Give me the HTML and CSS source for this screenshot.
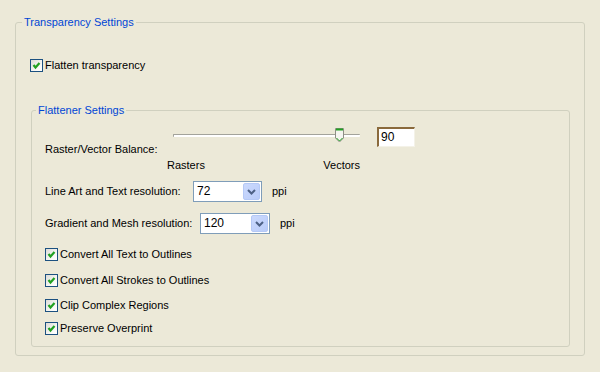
FILE: index.html
```html
<!DOCTYPE html>
<html>
<head>
<meta charset="utf-8">
<link rel="stylesheet" href="styles.css">
</head>
<body>
<fieldset class="group outer">
  <legend class="legend">Transparency Settings</legend>
  <label class="check top-check">
    <span class="box"><svg width="11" height="11" viewBox="0 0 11 11"><polyline points="2.5,5 4.5,7.5 8.5,3" fill="none" stroke="#21a121" stroke-width="2.2"/></svg></span>
    <span>Flatten transparency</span>
  </label>
  <fieldset class="group inner">
    <legend class="legend inner-legend">Flattener Settings</legend>
    <div class="balance">
      <div class="balance-label">Raster/Vector Balance:</div>
      <div class="slider">
        <div class="track-row">
          <div class="track"></div>
          <svg class="thumb" width="9" height="15" viewBox="0 0 9 15">
            <path d="M0.5,0.5 H8.5 V10 L4.5,14 L0.5,10 Z" fill="#f5f5f0" stroke="#8e8e86"/>
            <line x1="1" y1="1.5" x2="8" y2="1.5" stroke="#21a121" stroke-width="2"/>
            <polyline points="1.5,10 4.5,13 7.5,10" fill="none" stroke="#21a121" stroke-width="1"/>
          </svg>
        </div>
        <div class="slider-labels"><span>Rasters</span><span>Vectors</span></div>
      </div>
      <div class="textbox">90</div>
    </div>
    <div class="res-row first">
      <div class="res-label w1">Line Art and Text resolution:</div>
      <div class="select s1"><span class="val">72</span><span class="btn"><svg width="9" height="6" viewBox="0 0 9 6"><polyline points="1,1 4.5,4.5 8,1" fill="none" stroke="#4d6185" stroke-width="2"/></svg></span></div>
      <span class="unit">ppi</span>
    </div>
    <div class="res-row second">
      <div class="res-label w2">Gradient and Mesh resolution:</div>
      <div class="select s2"><span class="val">120</span><span class="btn"><svg width="9" height="6" viewBox="0 0 9 6"><polyline points="1,1 4.5,4.5 8,1" fill="none" stroke="#4d6185" stroke-width="2"/></svg></span></div>
      <span class="unit">ppi</span>
    </div>
    <div class="checks">
      <label class="check c1"><span class="box"><svg width="11" height="11" viewBox="0 0 11 11"><polyline points="2.5,5 4.5,7.5 8.5,3" fill="none" stroke="#21a121" stroke-width="2.2"/></svg></span><span>Convert All Text to Outlines</span></label>
      <label class="check c2"><span class="box"><svg width="11" height="11" viewBox="0 0 11 11"><polyline points="2.5,5 4.5,7.5 8.5,3" fill="none" stroke="#21a121" stroke-width="2.2"/></svg></span><span>Convert All Strokes to Outlines</span></label>
      <label class="check c3"><span class="box"><svg width="11" height="11" viewBox="0 0 11 11"><polyline points="2.5,5 4.5,7.5 8.5,3" fill="none" stroke="#21a121" stroke-width="2.2"/></svg></span><span>Clip Complex Regions</span></label>
      <label class="check c4"><span class="box"><svg width="11" height="11" viewBox="0 0 11 11"><polyline points="2.5,5 4.5,7.5 8.5,3" fill="none" stroke="#21a121" stroke-width="2.2"/></svg></span><span>Preserve Overprint</span></label>
    </div>
  </fieldset>
</fieldset>
</body>
</html>
```

FILE: styles.css
```css
html, body {
  margin: 0;
  background: #ece9d8;
}
body {
  padding: 16px 0 0 15px;
  font-family: "Liberation Sans", Arial, sans-serif;
  font-size: 11px;
  line-height: 13px;
  color: #000;
}
.group {
  border: 1px solid #d0d0bf;
  border-radius: 3px;
  margin: 0;
  padding: 0;
  box-sizing: border-box;
  min-width: 0;
}
.legend {
  color: #0046d5;
  padding: 0 2px;
  margin-left: 6px;
  line-height: 13px;
}
.inner-legend {
  margin-left: -9px;
}
.outer {
  width: 570px;
  height: 340px;
}
.check {
  display: flex;
  align-items: center;
  height: 13px;
}
.box {
  width: 11px;
  height: 11px;
  border: 1px solid #1c5180;
  background: linear-gradient(135deg, #dcdcd7 0%, #fafaf8 70%, #ffffff 100%);
  margin-right: 2px;
  display: flex;
}
.top-check {
  margin: 30px 0 0 14px;
}
.inner {
  margin: 32px 0 0 15px;
  width: 539px;
  height: 243px;
  padding-left: 13px;
}
.balance {
  display: flex;
  align-items: flex-start;
  margin-top: 8px;
}
.balance-label {
  width: 122px;
  margin-top: 18px;
}
.slider {
  width: 195px;
}
.track-row {
  position: relative;
  height: 22px;
}
.track {
  position: absolute;
  left: 6px;
  right: 2px;
  top: 9px;
  height: 2px;
  border-top: 1px solid #a3a39b;
  border-left: 1px solid #a3a39b;
  background: #fff;
  border-radius: 1px;
}
.thumb {
  position: absolute;
  left: 168px;
  top: 3px;
}
.slider-labels {
  display: flex;
  justify-content: space-between;
  margin-top: 12px;
  padding-right: 2px;
}
.textbox {
  margin: 2px 0 0 15px;
  width: 38px;
  height: 20px;
  box-sizing: border-box;
  background: #fff;
  border-top: 2px solid #8a6a3c;
  border-left: 2px solid #8a6a3c;
  border-right: 1px solid #f4f2e8;
  border-bottom: 1px solid #f4f2e8;
  padding: 2px 0 0 2px;
  font-size: 12px;
}
.res-row {
  display: flex;
  align-items: center;
  height: 21px;
}
.res-row.first { margin-top: 9px; }
.res-row.second { margin-top: 11px; }
.w1 { width: 148px; }
.w2 { width: 155px; }
.select {
  height: 21px;
  box-sizing: border-box;
  border: 1px solid #7f9db9;
  background: #fff;
  display: flex;
  align-items: center;
  justify-content: space-between;
  padding: 1px;
}
.s1 { width: 69px; }
.s2 { width: 70px; }
.val {
  padding-left: 2px;
  font-size: 12px;
}
.btn {
  width: 17px;
  height: 17px;
  box-sizing: border-box;
  background: linear-gradient(135deg, #cbd9fd, #b9ccf9);
  border: 1px solid #b5c9f6;
  border-radius: 2px;
  display: flex;
  align-items: center;
  justify-content: center;
}
.unit {
  margin-left: 10px;
}
.checks {
  margin-top: 14px;
}
.c2 { margin-top: 13px; }
.c3 { margin-top: 12px; }
.c4 { margin-top: 10px; }
```
